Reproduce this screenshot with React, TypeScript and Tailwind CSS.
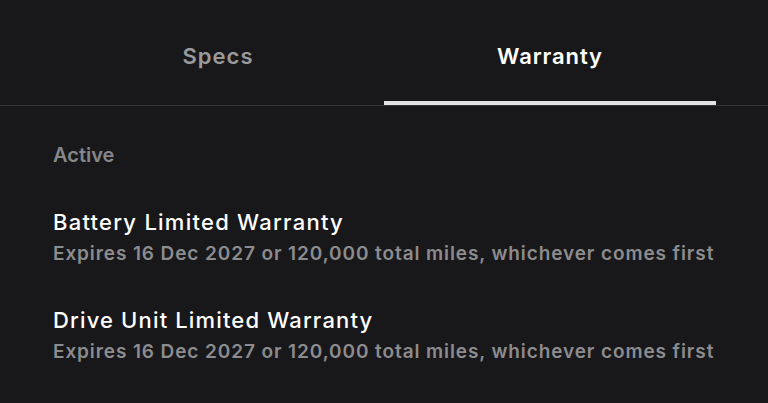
export default function App() {
  return (
    <div className="w-[768px] h-[403px] bg-[#18181a] overflow-hidden" style={{ fontFamily: "Inter, 'Noto Sans', sans-serif" }}>
      <div className="border-b border-[#333335]">
        <div className="flex px-[52px]">
          <div className="flex-1 h-[105px] flex flex-col items-center">
            <div className="mt-[41px] text-[22px] font-semibold tracking-[1px] text-[#9a9a9c] leading-[30px]">Specs</div>
          </div>
          <div className="flex-1 h-[105px] flex flex-col items-center justify-between">
            <div className="mt-[41px] text-[22px] font-semibold tracking-[0.9px] text-white leading-[30px]">Warranty</div>
            <div className="h-[4px] w-full bg-[#e2e2e2]" />
          </div>
        </div>
      </div>
      <div className="px-[53px]">
        <div className="mt-[37px] text-[20px] font-semibold text-[#87878a] leading-[24px]">Active</div>
        <div className="mt-[40px]">
          <div className="text-[22px] font-medium tracking-[1.25px] text-white leading-[30px]">Battery Limited Warranty</div>
          <div className="text-[19px] font-semibold tracking-[0.9px] text-[#8c8c8f] leading-[33px]">Expires 16 Dec 2027 or 120,000 total miles, whichever comes first</div>
        </div>
        <div className="mt-[35px]">
          <div className="text-[22px] font-medium tracking-[1.15px] text-white leading-[30px]">Drive Unit Limited Warranty</div>
          <div className="text-[19px] font-semibold tracking-[0.9px] text-[#8c8c8f] leading-[33px]">Expires 16 Dec 2027 or 120,000 total miles, whichever comes first</div>
        </div>
      </div>
    </div>
  );
}
